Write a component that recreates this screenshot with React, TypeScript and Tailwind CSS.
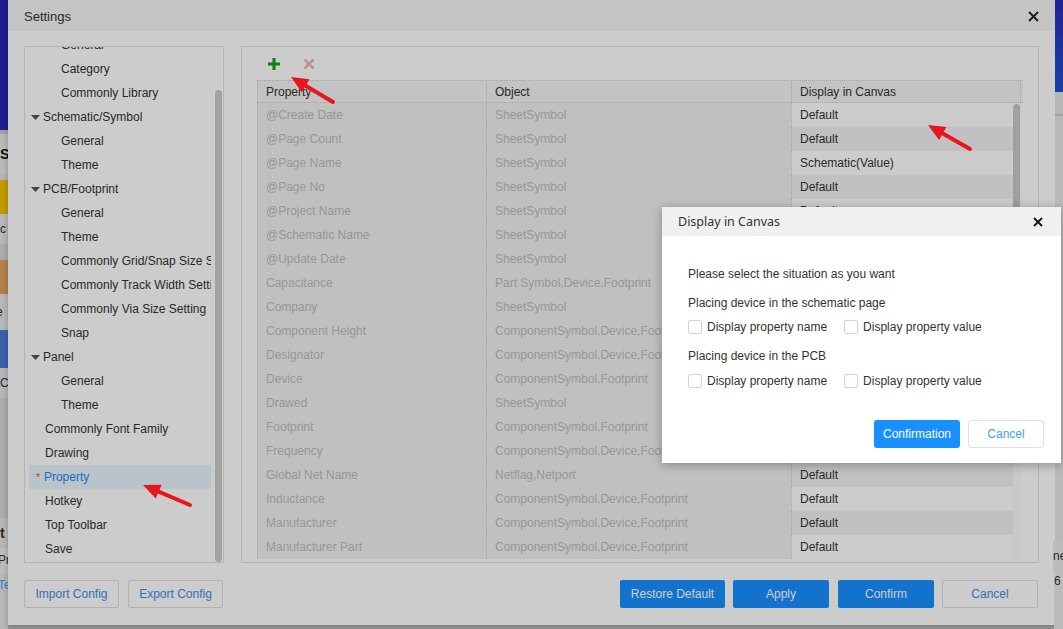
import React from "react";

type MenuItem = { t: string; lv: 0 | 1 | 2; active?: boolean };

const menu: MenuItem[] = [
  { t: "General", lv: 2 },
  { t: "Category", lv: 2 },
  { t: "Commonly Library", lv: 2 },
  { t: "Schematic/Symbol", lv: 1 },
  { t: "General", lv: 2 },
  { t: "Theme", lv: 2 },
  { t: "PCB/Footprint", lv: 1 },
  { t: "General", lv: 2 },
  { t: "Theme", lv: 2 },
  { t: "Commonly Grid/Snap Size Setting", lv: 2 },
  { t: "Commonly Track Width Setting", lv: 2 },
  { t: "Commonly Via Size Setting", lv: 2 },
  { t: "Snap", lv: 2 },
  { t: "Panel", lv: 1 },
  { t: "General", lv: 2 },
  { t: "Theme", lv: 2 },
  { t: "Commonly Font Family", lv: 0 },
  { t: "Drawing", lv: 0 },
  { t: "Property", lv: 0, active: true },
  { t: "Hotkey", lv: 0 },
  { t: "Top Toolbar", lv: 0 },
  { t: "Save", lv: 0 },
];

const CSF = "ComponentSymbol,Device,Footprint";
const rows: [string, string, string][] = [
  ["@Create Date", "SheetSymbol", "Default"],
  ["@Page Count", "SheetSymbol", "Default"],
  ["@Page Name", "SheetSymbol", "Schematic(Value)"],
  ["@Page No", "SheetSymbol", "Default"],
  ["@Project Name", "SheetSymbol", "Default"],
  ["@Schematic Name", "SheetSymbol", "Default"],
  ["@Update Date", "SheetSymbol", "Default"],
  ["Capacitance", "Part Symbol,Device,Footprint", "Default"],
  ["Company", "SheetSymbol", "Default"],
  ["Component Height", CSF, "Default"],
  ["Designator", CSF, "Default"],
  ["Device", "ComponentSymbol,Footprint", "Default"],
  ["Drawed", "SheetSymbol", "Default"],
  ["Footprint", "ComponentSymbol,Footprint", "Default"],
  ["Frequency", CSF, "Default"],
  ["Global Net Name", "Netflag,Netport", "Default"],
  ["Inductance", CSF, "Default"],
  ["Manufacturer", CSF, "Default"],
  ["Manufacturer Part", CSF, "Default"],
];

function Caret() {
  return (
    <svg width="9" height="5" viewBox="0 0 9 5" className="shrink-0">
      <path d="M0 0h9L4.5 5z" fill="#555" />
    </svg>
  );
}

function Arrow({ x1, y1, x2, y2 }: { x1: number; y1: number; x2: number; y2: number }) {
  // tail (x1,y1) -> tip (x2,y2)
  const dx = x2 - x1;
  const dy = y2 - y1;
  const len = Math.hypot(dx, dy);
  const ux = dx / len;
  const uy = dy / len;
  const nx = x2 - ux * 17;
  const ny = y2 - uy * 17;
  const px = -uy * 7.5;
  const py = ux * 7.5;
  return (
    <g>
      <line x1={x1} y1={y1} x2={nx} y2={ny} stroke="#e8161c" strokeWidth="4" strokeLinecap="round" />
      <polygon points={`${x2},${y2} ${nx + px},${ny + py} ${nx - px},${ny - py}`} fill="#e8161c" />
    </g>
  );
}

function Checkbox({ label }: { label: string }) {
  return (
    <label className="flex items-center gap-[5px]">
      <span className="w-[14px] h-[14px] rounded-[2px] border border-[#cfd3db] bg-white" />
      <span>{label}</span>
    </label>
  );
}

export default function App() {
  return (
    <div className="relative w-[1063px] h-[629px] overflow-hidden bg-[#c4c4c4] font-['Liberation_Sans',Arial,sans-serif] text-[12px] text-[#333]">
      <div className="flex h-[629px]">
        {/* app behind, left edge */}
        <div className="w-2 flex flex-col shrink-0">
          <div className="h-[130px] bg-[#2626b0]" />
          <div className="h-[4px] bg-[#c8c8c8]" />
          <div className="h-[40px] bg-[#e8e8e8] text-[14px] font-bold text-[#111] leading-[40px]">S</div>
          <div className="h-[6px] bg-[#e2e2e2]" />
          <div className="h-[34px] bg-[#f2c200]" />
          <div className="h-[30px] bg-[#e6e6e6] text-[12px] leading-[30px] -ml-1">rc</div>
          <div className="h-[16px] bg-[#d6d6d6]" />
          <div className="h-[34px] bg-[#e0a060]" />
          <div className="h-[36px] bg-[#e6e6e6] text-[12px] leading-[36px] -ml-1">e</div>
          <div className="h-[38px] bg-[#4a7ad8]" />
          <div className="h-[30px] bg-[#e4e4e4] text-[12px] leading-[30px]">C</div>
          <div className="h-[120px] bg-[#d8d8d8]" />
          <div className="h-[30px] bg-[#e4e4e4] text-[14px] font-bold leading-[30px]">t</div>
          <div className="h-[25px] bg-[#ececec] text-[12px] leading-[25px] -ml-0.5">Pr</div>
          <div className="flex-1 bg-[#e6e6e6] text-[12px] text-[#409eff] leading-[25px] -ml-0.5">Te</div>
        </div>

        {/* Settings dialog */}
        <div className="w-[1047px] h-[625px] shrink-0 flex flex-col bg-white shadow-[0_2px_6px_rgba(0,0,0,0.25)]">
          <div className="h-[31px] shrink-0 flex items-center justify-between pl-4 pr-[16px] pt-[2px] bg-[#f5f5f5]">
            <span className="text-[13px] text-[#333]">Settings</span>
            <svg width="11" height="11" viewBox="0 0 11 11">
              <path d="M1 1l9 9M10 1l-9 9" stroke="#222" strokeWidth="1.8" />
            </svg>
          </div>

          <div className="flex-1 flex flex-col px-4 pt-[15px] pb-[17px]">
            <div className="h-[517px] flex gap-[17px]">
              {/* left menu */}
              <div className="w-[200px] shrink-0 border border-[#e1e1e1] flex overflow-hidden">
                <div className="flex-1 min-w-0 overflow-hidden pl-1 pr-[4px]">
                  <div className="-mt-[14px]">
                    {menu.map((m, i) => (
                      <div
                        key={i}
                        className={`h-6 flex items-center whitespace-nowrap overflow-hidden ${m.active ? "bg-[#e6f4fd]" : ""} ${
                          m.lv === 2 ? "pl-[32px]" : m.lv === 1 ? "pl-[2px] gap-[3px]" : "pl-[16px]"
                        }`}
                      >
                        {m.lv === 1 && <Caret />}
                        {m.active && <span className="-ml-[9px] mr-[4px] text-[#f04040] text-[10px]">*</span>}
                        <span className={m.active ? "text-[#2588ee]" : ""}>{m.t}</span>
                      </div>
                    ))}
                  </div>
                </div>
                <div className="w-[7px] shrink-0 mr-px pt-[43px]">
                  <div className="h-full rounded-full bg-[#cccccc]" />
                </div>
              </div>

              {/* right content */}
              <div className="flex-1 border border-[#e1e1e1] flex flex-col px-[15px] overflow-hidden">
                <div className="h-[33px] shrink-0 flex items-center gap-[22px] pl-[10px]">
                  <svg width="14" height="14" viewBox="0 0 14 14">
                    <path d="M7 1v12M1 7h12" stroke="#13a013" strokeWidth="3" />
                  </svg>
                  <svg width="12" height="12" viewBox="0 0 12 12">
                    <path d="M1.5 1.5l9 9M10.5 1.5l-9 9" stroke="#f4b4b4" strokeWidth="2.6" />
                  </svg>
                </div>

                <div className="flex-1 flex flex-col overflow-hidden">
                  <div className="h-[23px] shrink-0 grid grid-cols-[229px_305px_230px] bg-[#f4f4f4] border-y border-dotted border-[#cfcfcf] text-[#333]">
                    <div className="pl-[8px] border-l border-dotted border-[#cfcfcf] flex items-center">Property</div>
                    <div className="pl-[8px] border-l border-dotted border-[#cfcfcf] flex items-center">Object</div>
                    <div className="pl-[8px] border-x border-dotted border-[#cfcfcf] flex items-center">Display in Canvas</div>
                  </div>
                  <div className="flex-1 flex overflow-hidden">
                    <div className="w-[756px] shrink-0">
                      {rows.map((r, i) => (
                        <div key={i} className="h-6 grid grid-cols-[229px_305px_222px]">
                          <div className="pl-[8px] flex items-center bg-[#f0f0f0] text-[#bdbdbd] border-l border-dotted border-[#cfcfcf] whitespace-nowrap overflow-hidden">
                            {r[0]}
                          </div>
                          <div className="pl-[8px] flex items-center bg-[#f0f0f0] text-[#bdbdbd] border-l border-dotted border-[#cfcfcf] whitespace-nowrap overflow-hidden">
                            {r[1]}
                          </div>
                          <div
                            className={`pl-[8px] flex items-center border-l border-dotted border-[#cfcfcf] text-[#333] ${
                              i % 2 === 0 ? "bg-white" : "bg-[#f2f2f2]"
                            }`}
                          >
                            {r[2]}
                          </div>
                        </div>
                      ))}
                    </div>
                    <div className="w-2 shrink-0 bg-[#fafafa] pt-px pr-px">
                      <div className="h-[300px] rounded-full bg-[#c8c8c8]" />
                    </div>
                  </div>
                </div>
              </div>
            </div>

            <div className="mt-[17px] h-7 flex items-stretch">
              <button className="w-[95px] border border-[#dcdfe6] rounded-[2px] text-[#3d8fe6] bg-white">Import Config</button>
              <button className="ml-[9px] w-[95px] border border-[#dcdfe6] rounded-[2px] text-[#3d8fe6] bg-white">Export Config</button>
              <div className="flex-1" />
              <button className="w-[105px] rounded-[2px] bg-[#1890ff] text-white">Restore Default</button>
              <button className="ml-[8px] w-[96px] rounded-[2px] bg-[#1890ff] text-white">Apply</button>
              <button className="ml-[9px] w-[96px] rounded-[2px] bg-[#1890ff] text-white">Confirm</button>
              <button className="ml-[8px] w-[96px] border border-[#dcdfe6] rounded-[2px] bg-white text-[#3d8fe6] mr-px">Cancel</button>
            </div>
          </div>
        </div>

        {/* app behind, right edge */}
        <div className="w-2 flex flex-col shrink-0">
          <div className="h-[92px] bg-gradient-to-b from-[#2a2ab8] to-[#2050d0]" />
          <div className="h-[22px] bg-[#e4e4e4]" />
          <div className="h-[2px] bg-[#c8c8c8]" />
          <div className="h-[425px] bg-[#e8e8e8]" />
          <div className="h-[30px] bg-[#ececec] text-[12px] leading-[30px] -ml-[2px]">ne</div>
          <div className="flex-1 bg-[#ececec] text-[12px] leading-[20px] -ml-[1px]">6</div>
        </div>
      </div>

      {/* modal mask */}
      <div className="absolute inset-0 bg-black/20" />

      {/* Display in Canvas modal */}
      <div className="absolute left-[662px] top-[207px] w-[399px] h-[256px] bg-white shadow-[0_2px_10px_rgba(0,0,0,0.3)] flex flex-col">
        <div className="h-[29px] shrink-0 bg-[#f0f0f0] flex items-center justify-between pl-4 pr-[18px] pt-px">
          <span className="font-['Noto_Sans',sans-serif] text-[12.5px] text-[#333]">Display in Canvas</span>
          <svg width="10" height="10" viewBox="0 0 10 10">
            <path d="M1 1l8 8M9 1l-8 8" stroke="#111" strokeWidth="1.8" />
          </svg>
        </div>
        <div className="flex-1 flex flex-col pl-[26px] pr-[17px] pt-[30px] pb-[15px]">
          <div className="h-4 flex items-center">Please select the situation as you want</div>
          <div className="mt-[13px] h-4 flex items-center">Placing device in the schematic page</div>
          <div className="mt-[8px] h-4 flex items-center gap-[17px]">
            <Checkbox label="Display property name" />
            <Checkbox label="Display property value" />
          </div>
          <div className="mt-[13px] h-4 flex items-center">Placing device in the PCB</div>
          <div className="mt-[9px] h-4 flex items-center gap-[17px]">
            <Checkbox label="Display property name" />
            <Checkbox label="Display property value" />
          </div>
          <div className="flex-1" />
          <div className="h-7 flex justify-end gap-2">
            <button className="w-[86px] rounded-[3px] bg-[#1890ff] text-white">Confirmation</button>
            <button className="w-[76px] rounded-[3px] border border-[#dcdfe6] bg-white text-[#409eff]">Cancel</button>
          </div>
        </div>
      </div>

      {/* annotation arrows */}
      <svg className="absolute inset-0 pointer-events-none" width="1063" height="629">
        <Arrow x1={333} y1={102} x2={291} y2={77} />
        <Arrow x1={970} y1={149} x2={928} y2={125} />
        <Arrow x1={190} y1={505} x2={143} y2={485} />
      </svg>
    </div>
  );
}
